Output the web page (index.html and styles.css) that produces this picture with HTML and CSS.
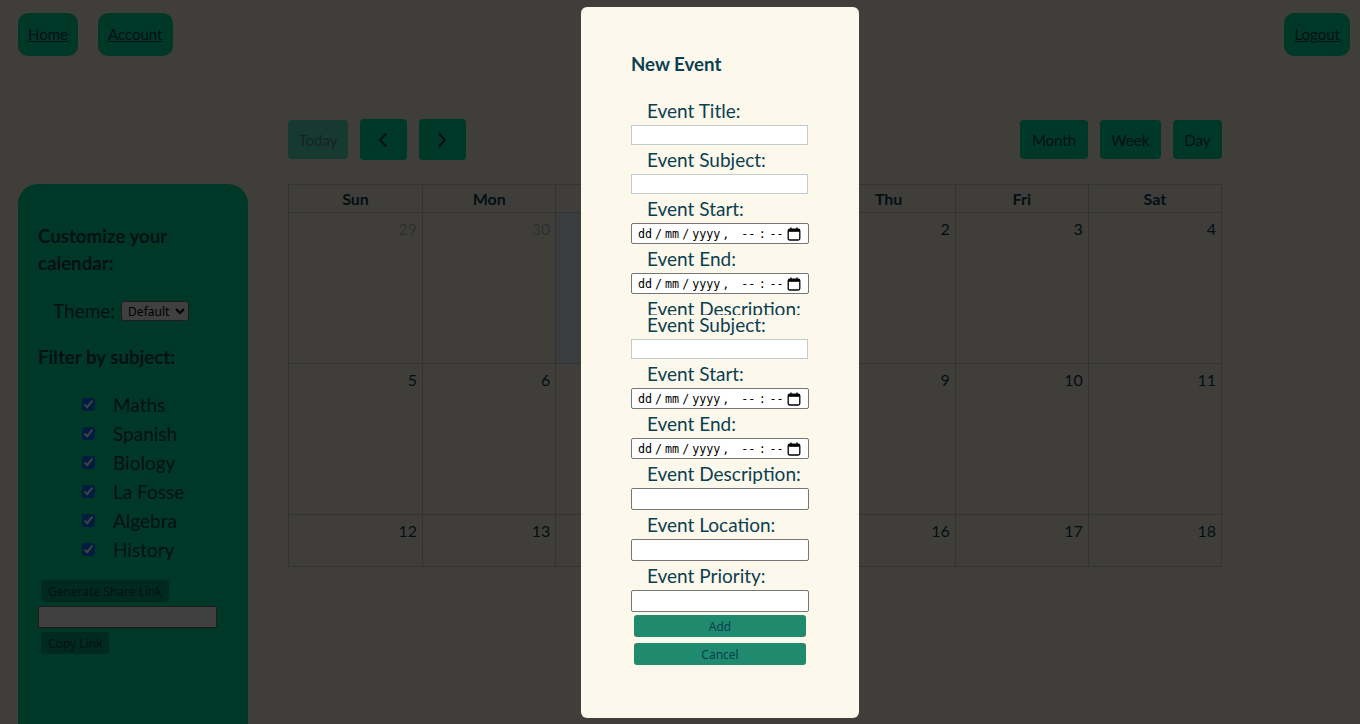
FILE: index.html
```html
<!DOCTYPE html>
<html lang="en">
<head>
    <meta charset="UTF-8">
    <title>Calendar</title>
    <link rel="stylesheet" href="styles.css">
</head>
<body>
<nav class="topnav">
    <div class="nav-left">
        <a class="nav-btn" href="#">Home</a>
        <a class="nav-btn" href="#">Account</a>
    </div>
    <a class="nav-btn" href="#">Logout</a>
</nav>

<div class="main">
    <!-- Sidebar -->
    <aside class="sidebar">
        <h3>Customize your calendar:</h3>
        <div class="theme-row">
            <span>Theme:</span>
            <select class="theme-select">
                <option>Default</option>
            </select>
        </div>
        <h3>Filter by subject:</h3>
        <ul class="subjects">
            <li><input type="checkbox" checked><span>Maths</span></li>
            <li><input type="checkbox" checked><span>Spanish</span></li>
            <li><input type="checkbox" checked><span>Biology</span></li>
            <li><input type="checkbox" checked><span>La Fosse</span></li>
            <li><input type="checkbox" checked><span>Algebra</span></li>
            <li><input type="checkbox" checked><span>History</span></li>
        </ul>
        <div class="share">
            <button class="share-btn">Generate Share Link</button>
            <input class="share-input" type="text">
            <button class="share-btn">Copy Link</button>
        </div>
    </aside>

    <!-- Calendar -->
    <section class="calendar">
        <div class="toolbar">
            <div class="tb-group">
                <button class="cal-btn today" disabled>Today</button>
                <button class="cal-btn arrow">
                    <svg width="10" height="16" viewBox="0 0 10 16"><path d="M8 1.5 L2 8 L8 14.5" fill="none" stroke="currentColor" stroke-width="2"/></svg>
                </button>
                <button class="cal-btn arrow">
                    <svg width="10" height="16" viewBox="0 0 10 16"><path d="M2 1.5 L8 8 L2 14.5" fill="none" stroke="currentColor" stroke-width="2"/></svg>
                </button>
            </div>
            <div class="tb-group">
                <button class="cal-btn">Month</button>
                <button class="cal-btn">Week</button>
                <button class="cal-btn">Day</button>
            </div>
        </div>
        <div class="grid">
            <div class="dow">Sun</div>
            <div class="dow">Mon</div>
            <div class="dow">Tue</div>
            <div class="dow">Wed</div>
            <div class="dow">Thu</div>
            <div class="dow">Fri</div>
            <div class="dow">Sat</div>
        </div>
        <div class="weeks">
            <div class="week">
                <div class="day other">29</div>
                <div class="day other">30</div>
                <div class="day other today">31</div>
                <div class="day">1</div>
                <div class="day">2</div>
                <div class="day">3</div>
                <div class="day">4</div>
            </div>
            <div class="week">
                <div class="day">5</div>
                <div class="day">6</div>
                <div class="day">7</div>
                <div class="day">8</div>
                <div class="day">9</div>
                <div class="day">10</div>
                <div class="day">11</div>
            </div>
            <div class="week">
                <div class="day">12</div>
                <div class="day">13</div>
                <div class="day">14</div>
                <div class="day">15</div>
                <div class="day">16</div>
                <div class="day">17</div>
                <div class="day">18</div>
            </div>
        </div>
    </section>
</div>

<!-- New event modal -->
<div class="backdrop"></div>
<div class="modal">
    <h3>New Event</h3>
    <div class="form-page">
        <label>Event Title:</label>
        <input class="field" type="text">
        <label>Event Subject:</label>
        <input class="field" type="text">
        <label>Event Start:</label>
        <div class="date">
            <span class="seg">dd</span><span class="sep">/</span><span class="seg">mm</span><span class="sep">/</span><span class="seg">yyyy</span><span class="sep comma">,</span><span class="seg">--</span><span class="sep colon">:</span><span class="seg">--</span>
            <svg class="cal-icon" width="14" height="14" viewBox="0 0 14 14"><rect x="1.2" y="2.2" width="11.6" height="10.8" rx="1.5" fill="none" stroke="#000" stroke-width="1.3"/><rect x="1.2" y="2.2" width="11.6" height="2.6" fill="#000"/><path d="M4 0.5V3M10 0.5V3" stroke="#000" stroke-width="1.3"/></svg>
        </div>
        <label>Event End:</label>
        <div class="date">
            <span class="seg">dd</span><span class="sep">/</span><span class="seg">mm</span><span class="sep">/</span><span class="seg">yyyy</span><span class="sep comma">,</span><span class="seg">--</span><span class="sep colon">:</span><span class="seg">--</span>
            <svg class="cal-icon" width="14" height="14" viewBox="0 0 14 14"><rect x="1.2" y="2.2" width="11.6" height="10.8" rx="1.5" fill="none" stroke="#000" stroke-width="1.3"/><rect x="1.2" y="2.2" width="11.6" height="2.6" fill="#000"/><path d="M4 0.5V3M10 0.5V3" stroke="#000" stroke-width="1.3"/></svg>
        </div>
        <label>Event Description:</label>
        <input class="plain" type="text">
    </div>
    <div class="form-rest">
        <label>Event Subject:</label>
        <input class="field" type="text">
        <label>Event Start:</label>
        <div class="date">
            <span class="seg">dd</span><span class="sep">/</span><span class="seg">mm</span><span class="sep">/</span><span class="seg">yyyy</span><span class="sep comma">,</span><span class="seg">--</span><span class="sep colon">:</span><span class="seg">--</span>
            <svg class="cal-icon" width="14" height="14" viewBox="0 0 14 14"><rect x="1.2" y="2.2" width="11.6" height="10.8" rx="1.5" fill="none" stroke="#000" stroke-width="1.3"/><rect x="1.2" y="2.2" width="11.6" height="2.6" fill="#000"/><path d="M4 0.5V3M10 0.5V3" stroke="#000" stroke-width="1.3"/></svg>
        </div>
        <label>Event End:</label>
        <div class="date">
            <span class="seg">dd</span><span class="sep">/</span><span class="seg">mm</span><span class="sep">/</span><span class="seg">yyyy</span><span class="sep comma">,</span><span class="seg">--</span><span class="sep colon">:</span><span class="seg">--</span>
            <svg class="cal-icon" width="14" height="14" viewBox="0 0 14 14"><rect x="1.2" y="2.2" width="11.6" height="10.8" rx="1.5" fill="none" stroke="#000" stroke-width="1.3"/><rect x="1.2" y="2.2" width="11.6" height="2.6" fill="#000"/><path d="M4 0.5V3M10 0.5V3" stroke="#000" stroke-width="1.3"/></svg>
        </div>
        <label>Event Description:</label>
        <input class="plain" type="text">
        <label>Event Location:</label>
        <input class="plain" type="text">
        <label>Event Priority:</label>
        <input class="plain" type="text">
        <button class="modal-btn add">Add</button>
        <button class="modal-btn">Cancel</button>
    </div>
</div>
</body>
</html>
```
FILE: styles.css
```css
body {
    margin: 0;
    font-family: Lato, 'Open Sans', sans-serif;
    background-color: #fdf8ec;
    color: #0b4050;
    height: 724px;
    overflow: hidden;
}

/* top navigation */
.topnav {
    display: flex;
    justify-content: space-between;
    padding: 13px 10px 0 18px;
}
.nav-left {
    display: flex;
    gap: 20px;
}
.nav-btn {
    display: block;
    height: 43px;
    line-height: 43px;
    padding: 0 10px;
    border-radius: 10px;
    background-color: #00e0a0;
    color: #0b4050;
    font-size: 15px;
}

/* layout */
.main {
    display: flex;
    gap: 40px;
    padding: 64px 0 0 18px;
}

/* sidebar */
.sidebar {
    width: 190px;
    height: 520px;
    padding: 20px;
    margin-top: 64px;
    border-radius: 20px;
    background-color: #00e0a0;
}
.sidebar h3 {
    font-size: 18.7px;
    line-height: 27px;
    margin: 19px 0;
}
.theme-row {
    display: flex;
    align-items: center;
    gap: 6px;
    padding-left: 15px;
    font-size: 19px;
    height: 29px;
}
.theme-select {
    width: 68px;
    height: 20px;
    font-family: 'Noto Sans', sans-serif;
    font-size: 12px;
    padding: 0 2px;
    border: 1px solid #767676;
    border-radius: 3px;
    background: #fff;
}
.subjects {
    list-style: none;
    margin: 19px 0 0;
    padding: 0 0 0 44px;
}
.subjects li {
    display: flex;
    align-items: center;
    height: 29px;
    font-size: 19px;
}
.subjects input {
    width: 13px;
    height: 13px;
    margin: 0 18px 0 0;
}
.share {
    display: flex;
    flex-direction: column;
    align-items: flex-start;
    gap: 3px;
    margin-top: 16px;
}
.share-btn {
    margin-left: 3px;
    height: 22px;
    padding: 0 7px;
    border: none;
    border-radius: 3px;
    background-color: #00a878;
    font-family: 'Noto Sans', sans-serif;
    font-size: 12px;
    color: #0b4050;
}
.share-input {
    width: 175px;
    height: 18px;
    padding: 1px;
    margin: 1px 0;
    border: 1px solid #767676;
    background: #fff;
}

/* calendar */
.calendar {
    width: 934px;
}
.toolbar {
    display: flex;
    justify-content: space-between;
    align-items: center;
    height: 39px;
    margin-bottom: 25px;
}
.tb-group {
    display: flex;
    align-items: center;
    gap: 12px;
}
.cal-btn {
    height: 39px;
    padding: 0 11.5px;
    border: none;
    border-radius: 4px;
    background-color: #00e0a0;
    color: #0b4050;
    font-family: Lato, sans-serif;
    font-size: 15px;
}
.cal-btn.today {
    opacity: 0.65;
    padding: 0 10.5px;
}
.cal-btn.arrow {
    width: 47px;
    height: 41px;
    padding: 0;
    display: flex;
    align-items: center;
    justify-content: center;
}
.grid {
    display: grid;
    grid-template-columns: repeat(7, 1fr);
    border: 1px solid #ccc;
    border-bottom: none;
}
.dow {
    height: 27px;
    line-height: 27px;
    text-align: center;
    font-weight: bold;
    font-size: 16px;
    border-left: 1px solid #ccc;
}
.dow:first-child,
.day:first-child {
    border-left: none;
}
.weeks {
    height: 353px;
    overflow: hidden;
    border: 1px solid #ccc;
}
.week {
    display: grid;
    grid-template-columns: repeat(7, 1fr);
    height: 150px;
    border-bottom: 1px solid #ccc;
}
.day {
    border-left: 1px solid #ccc;
    text-align: right;
    padding: 4px 5px;
    font-size: 16px;
    line-height: 24px;
}
.day.other {
    color: rgba(11, 64, 80, 0.35);
}
.day.today {
    background-color: #e8f0f2;
}

/* modal */
.backdrop {
    position: fixed;
    inset: 0;
    background-color: rgba(0, 0, 0, 0.75);
}
.modal {
    position: fixed;
    top: 7px;
    left: 581px;
    width: 178px;
    height: 636px;
    padding: 25px 50px 50px;
    border-radius: 6px;
    background-color: #fdf8ec;
}
.modal h3 {
    font-size: 18.7px;
    line-height: 27px;
    margin: 18.7px 0;
}
.modal label {
    display: block;
    padding-left: 16px;
    font-size: 19px;
    line-height: 29px;
}
.form-page {
    height: 219px;
    overflow: hidden;
}
.form-rest {
    display: flex;
    flex-direction: column;
    margin-top: -5px;
}
.field {
    display: block;
    box-sizing: border-box;
    width: 177px;
    height: 20px;
    margin: 0;
    border: 1px solid #c3cbcb;
    background: #fff;
}
.date {
    display: flex;
    align-items: center;
    box-sizing: border-box;
    width: 178px;
    height: 21px;
    padding: 0 6px;
    border: 1px solid #767676;
    border-radius: 2px;
    background: #fff;
    font-family: 'DejaVu Sans Mono', monospace;
    font-size: 11.7px;
    color: #000;
    white-space: nowrap;
}
.date .sep {
    width: 13px;
    text-align: center;
}
.date .sep.comma {
    width: 21px;
    text-align: left;
    padding-left: 2px;
    box-sizing: border-box;
}
.date .sep.colon {
    width: 14px;
}
.cal-icon {
    margin-left: auto;
    margin-right: 1px;
}
.plain {
    display: block;
    box-sizing: border-box;
    width: 178px;
    height: 22px;
    margin: 0;
    border: 1px solid #767676;
    border-radius: 2px;
    background: #fff;
}
.modal-btn {
    box-sizing: border-box;
    width: 172px;
    height: 22px;
    margin: 3px 3px 0;
    border: none;
    border-radius: 3px;
    background-color: #1f8a6e;
    color: #0b4050;
    font-family: 'Noto Sans', sans-serif;
    font-size: 12px;
}
.modal-btn + .modal-btn {
    margin-top: 6px;
}
```
